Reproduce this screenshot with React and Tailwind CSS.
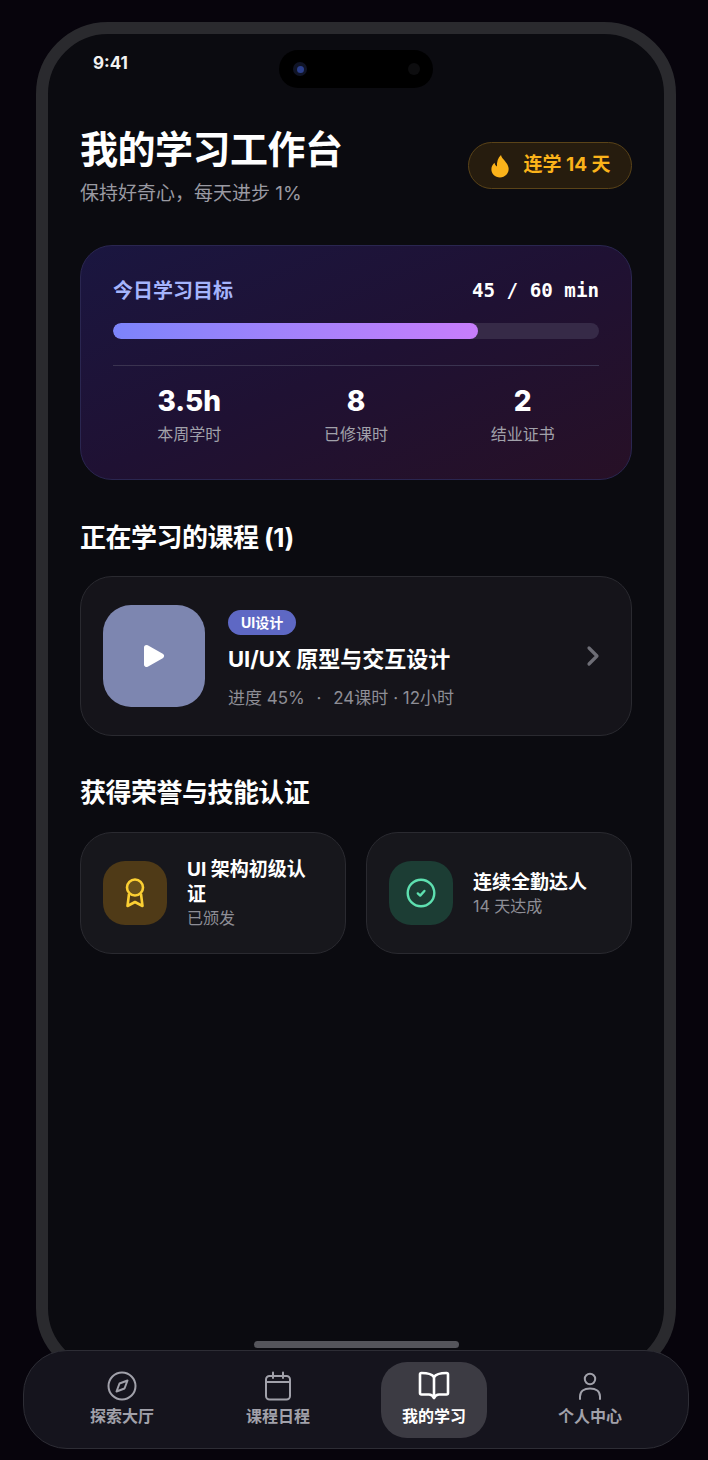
import React from 'react';
import { ChevronRight } from 'lucide-react';

const FONT = "font-['Inter','Noto_Sans_CJK_SC',sans-serif]";

const stats = [
  { value: '3.5h', label: '本周学时' },
  { value: '8', label: '已修课时' },
  { value: '2', label: '结业证书' },
];

const CompassIcon = () => (
  <svg width="30" height="30" viewBox="0 0 30 30" fill="none" stroke="currentColor" strokeWidth="2" strokeLinejoin="round">
    <circle cx="15" cy="15" r="13.5" />
    <path d="M20.5 9.5 L17.5 17.5 L9.5 20.5 L12.5 12.5 Z" />
  </svg>
);

const CalendarIcon = () => (
  <svg width="30" height="30" viewBox="0 0 30 30" fill="none" stroke="currentColor" strokeWidth="2" strokeLinecap="round">
    <rect x="3" y="5" width="24" height="23.5" rx="3.5" />
    <path d="M3 11 H27 M10 1.5 V7 M20 1.5 V7" />
  </svg>
);

const UserIcon = () => (
  <svg width="30" height="30" viewBox="0 0 30 30" fill="none" stroke="currentColor" strokeWidth="2" strokeLinecap="round">
    <circle cx="15" cy="8" r="5.2" />
    <path d="M5 28 V25.5 C5 20.5 9 17.5 15 17.5 C21 17.5 25 20.5 25 25.5 V28" />
  </svg>
);

const BookIcon = () => (
  <svg width="32" height="32" viewBox="0 0 32 32" fill="none" stroke="currentColor" strokeWidth="2.6" strokeLinejoin="round" strokeLinecap="round">
    <path d="M16 7 C14 4 10 3 3.5 3 Q2 3 2 4.5 V23 Q2 24.5 3.5 24.5 H11 C13.5 24.5 15 26 16 28 C17 26 18.5 24.5 21 24.5 H28.5 Q30 24.5 30 23 V4.5 Q30 3 28.5 3 C22 3 18 4 16 7 Z" />
    <path d="M16 7 V28" />
  </svg>
);

const FlameIcon = () => (
  <svg width="22" height="24" viewBox="0 0 22 24" fill="#fbb31a">
    <path d="M12 1 C12.6 5 18.8 8.2 19.6 14 C20.2 19.4 16 23.4 11 23.4 C6 23.4 2.2 19.8 2.4 15 C2.5 12.4 3.8 10.2 5.6 8.8 C5.8 10.6 6.6 11.8 8 12.4 C7.6 8 9 3.6 12 1 Z" />
  </svg>
);

const PlayIcon = () => (
  <svg width="22" height="24" viewBox="0 0 22 24" fill="white" stroke="white" strokeWidth="5" strokeLinejoin="round">
    <path d="M3.5 3.5 L18.5 12 L3.5 20.5 Z" />
  </svg>
);

const AwardIcon = () => (
  <svg width="24" height="32" viewBox="0 0 24 32" fill="none" stroke="#fbcf33" strokeWidth="2.6" strokeLinejoin="round">
    <circle cx="12" cy="10.5" r="8" fill="#fbcf33" fillOpacity="0.15" />
    <path d="M6 17 L4.5 29 L12 25 L19.5 29 L18 17" />
  </svg>
);

const CheckBadgeIcon = () => (
  <svg width="30" height="30" viewBox="0 0 30 30" fill="none" stroke="#5ee0b0" strokeWidth="2.4" strokeLinecap="round" strokeLinejoin="round">
    <circle cx="15" cy="15" r="13.3" />
    <path d="M11.8 15.4 L14.2 17.6 L18.4 13" />
  </svg>
);

const NavItem = ({ icon, label, active }) => (
  <div className={`flex h-[76px] w-[106px] flex-col items-center justify-center rounded-[26px] pb-[2px] ${active ? 'bg-[#3c3b43] text-white' : 'text-[#a1a1aa]'}`}>
    <div className="flex h-[32px] items-center justify-center">{icon}</div>
    <span className={`mt-[3px] text-[16px] leading-[22px] ${active ? 'font-bold' : 'font-semibold'}`}>{label}</span>
  </div>
);

const AchievementCard = ({ icon, iconBg, title, sub }) => (
  <div className="flex min-h-[122px] items-center gap-[20px] rounded-[32px] border border-[#2a2a30] bg-[#17171c] pl-[22px] pr-[26px]">
    <div className={`flex h-[64px] w-[64px] shrink-0 items-center justify-center rounded-[22px] ${iconBg}`}>{icon}</div>
    <div className="min-w-0">
      <div className="text-[19px] font-bold leading-[25px] text-white">{title}</div>
      <div className="text-[16px] leading-[22px] text-[#8e8e96]">{sub}</div>
    </div>
  </div>
);

export default function App() {
  return (
    <div className={`${FONT} relative h-[1460px] w-[708px] overflow-hidden bg-[#07040c] pt-[22px]`}>
      {/* phone body */}
      <div className="relative mx-[36px] h-[1358px] w-[640px] rounded-[72px] border-[12px] border-[#2a2a2e] bg-[#0b0b10] px-[32px]">
        <span className="absolute left-[45px] top-[18px] text-[17px] font-bold leading-[22px] text-[#f2f2f2]">9:41</span>
        <div className="absolute left-[231px] top-[16px] flex h-[38px] w-[154px] items-center justify-between rounded-full bg-black pl-[14px] pr-[13px]">
          <div className="flex h-[14px] w-[14px] items-center justify-center rounded-full bg-[#101426]">
            <div className="h-[7px] w-[7px] rounded-full bg-[#2b3f8c]" />
          </div>
          <div className="h-[12px] w-[12px] rounded-full bg-[#0d0d0f]" />
        </div>

        {/* header */}
        <div className="flex items-start justify-between pt-[92px]">
          <div>
            <h1 className="text-[38px] font-bold leading-[46px] tracking-[-0.5px] text-white">我的学习工作台</h1>
            <p className="mt-[9px] text-[19px] leading-[26px] text-[#9a9aa2]">保持好奇心，每天进步 1%</p>
          </div>
          <div className="mt-[16px] flex h-[47px] w-[164px] items-center justify-center gap-[12px] rounded-full border border-[#5a4318] bg-[#261c0e] text-[19px] font-bold text-[#fbb31a]">
            <FlameIcon />
            <span>连学 14 天</span>
          </div>
        </div>

        {/* daily goal */}
        <div className="mt-[38px] h-[235px] rounded-[32px] border border-[#2a2650] bg-gradient-to-br from-[#1a1640] via-[#1f1133] to-[#271026] px-[32px] pt-[31px]">
          <div className="flex items-center justify-between">
            <span className="text-[20px] font-bold leading-[28px] text-[#a5b4fc]">今日学习目标</span>
            <span className="font-['DejaVu_Sans_Mono',monospace] text-[19.2px] font-bold leading-[28px] text-white">45 / 60 min</span>
          </div>
          <div className="mt-[18px] h-[16px] overflow-hidden rounded-full bg-[#362a47]">
            <div className="h-full w-3/4 rounded-full bg-gradient-to-r from-[#7c84fb] to-[#c77dfb]" />
          </div>
          <div className="mt-[26px] border-t border-[#3a3350] pt-[15px]">
            <div className="-mx-[7px] grid grid-cols-3 text-center">
              {stats.map((s) => (
                <div key={s.label}>
                  <div className="text-[28px] font-extrabold leading-[40px] text-white">{s.value}</div>
                  <div className="mt-[1px] text-[16px] leading-[24px] text-[#a1a1aa]">{s.label}</div>
                </div>
              ))}
            </div>
          </div>
        </div>

        {/* current courses */}
        <h2 className="mt-[41px] text-[26px] font-bold leading-[34px] tracking-[-0.02em] text-white">正在学习的课程 (1)</h2>
        <div className="mt-[21px] flex h-[160px] items-center rounded-[32px] border border-[#2a2a30] bg-[#15141a] pl-[22px] pr-[22px]">
          <div className="flex h-[102px] w-[102px] shrink-0 items-center justify-center rounded-[28px] bg-[#7d86b0]">
            <PlayIcon />
          </div>
          <div className="ml-[23px] flex-1 self-start pt-[33px]">
            <span className="block w-fit rounded-full bg-[#5e68c4] px-[13px] text-[14px] font-bold leading-[25px] text-white">UI设计</span>
            <div className="mt-[7px] text-[22px] font-bold leading-[34px] text-white">UI/UX 原型与交互设计</div>
            <div className="mt-[10px] text-[17px] leading-[24px] text-[#8e8e96]">
              进度 45% <span className="mx-[7px]">·</span> 24课时 · 12小时
            </div>
          </div>
          <ChevronRight size={32} strokeWidth={2.4} className="text-[#6e6e76]" />
        </div>

        {/* achievements */}
        <h2 className="mt-[40px] text-[26px] font-bold leading-[34px] tracking-[-0.02em] text-white">获得荣誉与技能认证</h2>
        <div className="mt-[22px] grid grid-cols-2 gap-[20px]">
          <AchievementCard icon={<AwardIcon />} iconBg="bg-[#4f3a17]" title="UI 架构初级认证" sub="已颁发" />
          <AchievementCard icon={<CheckBadgeIcon />} iconBg="bg-[#1c3d34]" title="连续全勤达人" sub="14 天达成" />
        </div>

        <div className="absolute bottom-[20px] left-[206px] h-[7px] w-[205px] rounded-full bg-[#55555b]" />
      </div>

      {/* bottom tabs */}
      <nav className="absolute left-[23px] top-[1350px] flex h-[99px] w-[666px] items-center justify-center gap-[50px] rounded-[44px] border border-[#2d2d35] bg-[#15141d]">
        <NavItem icon={<CompassIcon />} label="探索大厅" />
        <NavItem icon={<CalendarIcon />} label="课程日程" />
        <NavItem active icon={<BookIcon />} label="我的学习" />
        <NavItem icon={<UserIcon />} label="个人中心" />
      </nav>
    </div>
  );
}
